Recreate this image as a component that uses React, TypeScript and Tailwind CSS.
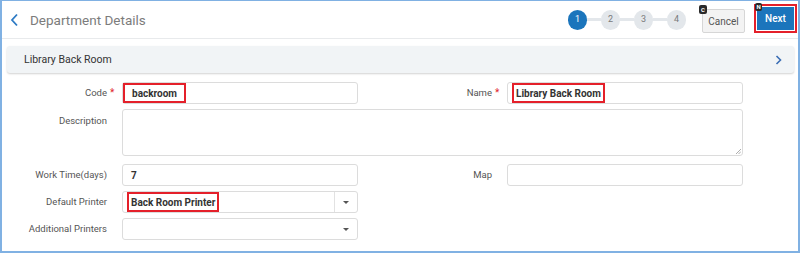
import React from "react";

const Caret = () => (
  <span className="w-0 h-0 border-l-[3px] border-r-[3px] border-t-[3px] border-l-transparent border-r-transparent border-t-[#555]" />
);

const Label = ({ text, req, top }: { text: string; req?: boolean; top?: boolean }) => (
  <div className={`flex justify-end ${top ? "items-start pt-[7px]" : "items-center"} text-[9.5px] text-[#555] leading-none whitespace-nowrap`}>
    <span>{text}</span>
    <span className="w-[8px] pl-[3px] text-[#e0262b] text-[10px]">{req ? "*" : ""}</span>
  </div>
);

export default function App() {
  return (
    <div className="w-[800px] h-[254px] bg-white font-['Roboto',sans-serif]">
      <div className="w-[800px] h-[253px] border-2 border-t-[1px] border-[#80b1e3] flex flex-col">
        {/* Header */}
        <div className="h-[38px] border-b border-[#e8eaec] flex items-center pl-[8px] pr-[1px]">
          <svg width="9" height="14" viewBox="0 0 9 14" className="shrink-0 mt-[1px]">
            <path d="M7 1.5 L2 7 L7 12.5" fill="none" stroke="#2d7ac4" strokeWidth="1.8" />
          </svg>
          <span className="ml-[11px] mt-[1px] text-[13.5px] text-[#7c7c7c]">Department Details</span>
          <div className="ml-auto flex items-center">
            <div className="flex items-center">
              <div className="w-[19px] h-[20px] rounded-full bg-[#1b75bc] text-white text-[9px] flex items-center justify-center">1</div>
              <div className="w-[14px] h-[3px] bg-[#e3e7eb]" />
              <div className="w-[19px] h-[20px] rounded-full bg-[#e3e7eb] text-[#7a7a7a] text-[9px] flex items-center justify-center">2</div>
              <div className="w-[14px] h-[3px] bg-[#e3e7eb]" />
              <div className="w-[19px] h-[20px] rounded-full bg-[#e3e7eb] text-[#7a7a7a] text-[9px] flex items-center justify-center">3</div>
              <div className="w-[14px] h-[3px] bg-[#e3e7eb]" />
              <div className="w-[19px] h-[20px] rounded-full bg-[#e3e7eb] text-[#7a7a7a] text-[9px] flex items-center justify-center">4</div>
            </div>
            <div className="relative ml-[16px] mt-[3px]">
              <div className="w-[43px] h-[24px] rounded-[2px] border border-[#d6d6d6] bg-[#f3f3f3] text-[10px] text-[#555] flex items-center justify-center">Cancel</div>
              <div className="absolute -left-[3px] -top-[4px] w-[8px] h-[9px] rounded-[2px] bg-[#2a2a2a] text-white text-[6px] font-bold flex items-center justify-center leading-none">C</div>
            </div>
            <div className="relative ml-[9px] mb-[2px]">
              <div className="border-2 border-[#e4202a] p-[1px]">
                <div className="w-[37px] h-[23px] bg-[#1b75bc] text-white text-[10px] font-medium flex items-center justify-center">Next</div>
              </div>
              <div className="absolute left-[1px] -top-[1px] w-[7px] h-[8px] rounded-[2px] bg-[#2a2a2a] text-white text-[6px] font-bold flex items-center justify-center leading-none">N</div>
            </div>
          </div>
        </div>

        {/* Section bar */}
        <div className="mt-[7px] ml-[5px] mr-[4px] h-[27px] rounded-[3px] bg-[#f1f4f6] shadow-[0_1px_2px_rgba(0,0,0,0.18)] flex items-center pl-[17px] pr-[12px]">
          <span className="text-[10.5px] text-[#333]">Library Back Room</span>
          <svg width="7" height="10" viewBox="0 0 7 10" className="ml-auto">
            <path d="M1.5 1 L5.5 5 L1.5 9" fill="none" stroke="#3a6db4" strokeWidth="1.6" />
          </svg>
        </div>

        {/* Form */}
        <div className="flex flex-col mt-[9px]">
          {/* Row 1 */}
          <div className="flex h-[22px]">
            <div className="w-[113px] flex justify-end"><Label text="Code" req /></div>
            <div className="ml-[7px] w-[236px] h-full rounded-[3px] border border-[#dcdcdc] flex items-stretch">
              <span className="border-2 border-[#e4202a] px-[7px] flex items-center text-[10px] font-bold text-[#333] whitespace-nowrap">backroom</span>
            </div>
            <div className="w-[142px] flex justify-end"><Label text="Name" req /></div>
            <div className="ml-[7px] w-[236px] h-full rounded-[3px] border border-[#dcdcdc] flex items-stretch">
              <span className="ml-[4px] border-2 border-[#e4202a] px-[2px] flex items-center text-[10px] font-bold text-[#333] whitespace-nowrap">Library Back Room</span>
            </div>
          </div>

          {/* Description */}
          <div className="flex h-[47px] mt-[5px]">
            <div className="w-[113px] flex justify-end"><Label text="Description" top /></div>
            <div className="relative ml-[7px] w-[621px] h-full rounded-[3px] border border-[#dcdcdc]">
              <svg width="6" height="6" viewBox="0 0 6 6" className="absolute right-[1px] bottom-[1px]">
                <path d="M6 1 L1 6 M6 3.5 L3.5 6" stroke="#999" strokeWidth="0.8" />
              </svg>
            </div>
          </div>

          {/* Work time / Map */}
          <div className="flex h-[22px] mt-[8px]">
            <div className="w-[113px] flex justify-end"><Label text="Work Time(days)" /></div>
            <div className="ml-[7px] w-[236px] h-full rounded-[3px] border border-[#dcdcdc] flex items-center pl-[8px] text-[10px] font-bold text-[#333]">7</div>
            <div className="w-[142px] flex justify-end"><Label text="Map" /></div>
            <div className="ml-[7px] w-[236px] h-full rounded-[3px] border border-[#dcdcdc]" />
          </div>

          {/* Default printer */}
          <div className="flex h-[22px] mt-[5px]">
            <div className="w-[113px] flex justify-end"><Label text="Default Printer" /></div>
            <div className="ml-[7px] w-[236px] h-full rounded-[3px] border border-[#dcdcdc] flex items-stretch">
              <span className="ml-[4px] border-2 border-[#e4202a] px-[2px] flex items-center text-[10px] font-bold text-[#333] whitespace-nowrap">Back Room Printer</span>
              <div className="ml-auto w-[23px] border-l border-[#e2e2e2] flex items-center justify-center"><Caret /></div>
            </div>
          </div>

          {/* Additional printers */}
          <div className="flex h-[22px] mt-[5px]">
            <div className="w-[113px] flex justify-end"><Label text="Additional Printers" /></div>
            <div className="ml-[7px] w-[236px] h-full rounded-[3px] border border-[#dcdcdc] flex items-stretch">
              <div className="ml-auto w-[23px] flex items-center justify-center"><Caret /></div>
            </div>
          </div>
        </div>
      </div>
    </div>
  );
}
